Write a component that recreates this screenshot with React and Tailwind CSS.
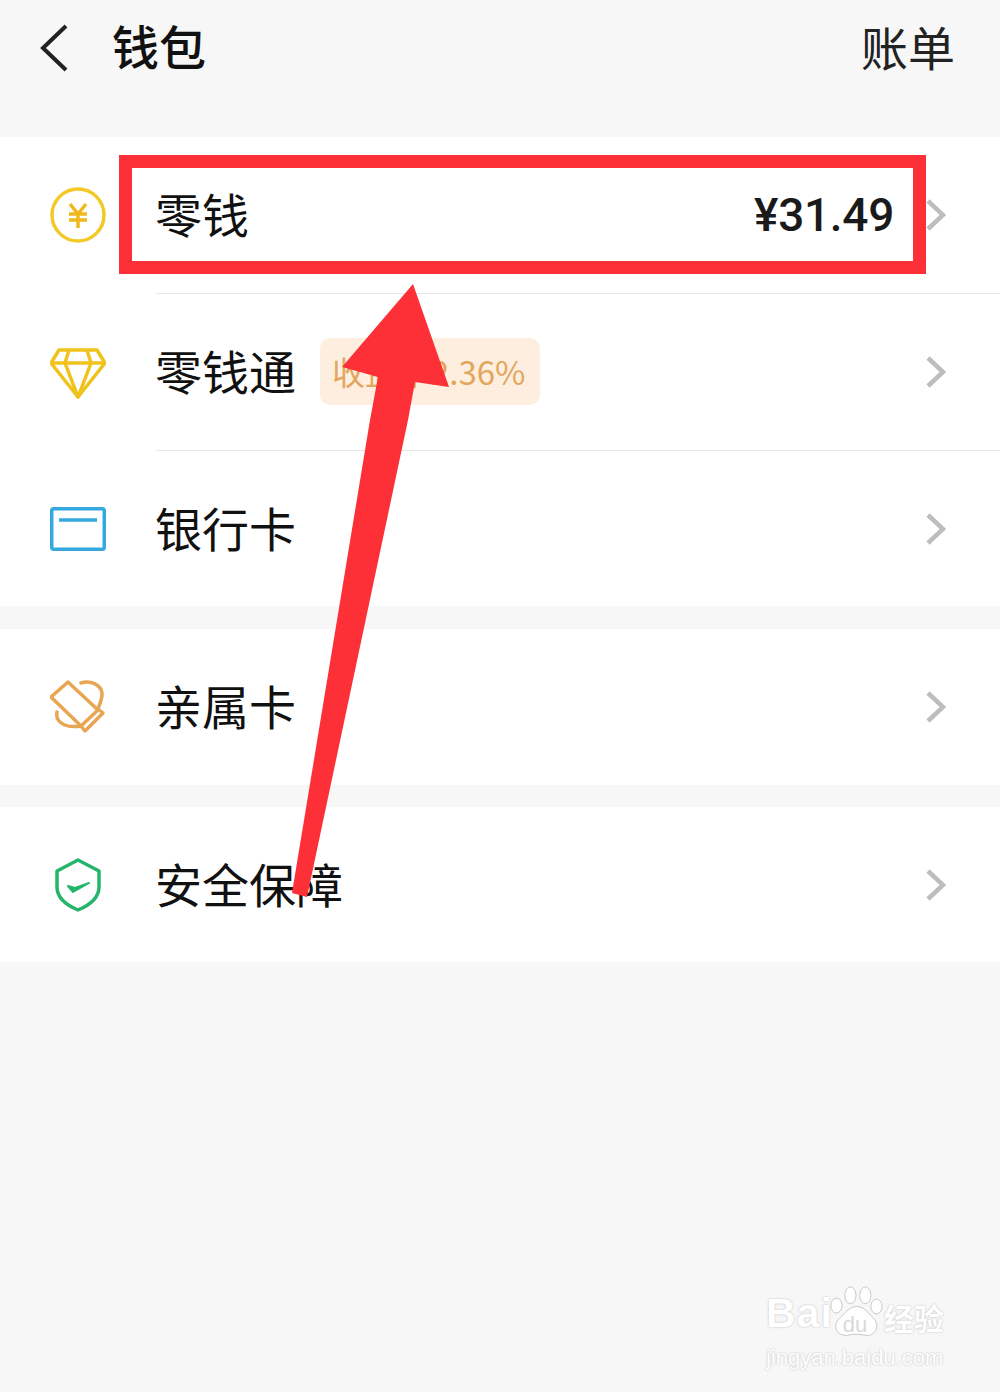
const CJK = 'font-["Noto_Sans_CJK_SC","Noto_Sans",sans-serif]'

function CoinIcon() {
    return <svg className="-mt-px" width="56" height="56" viewBox="0 0 56 56" fill="none" stroke="#f2c927" strokeWidth="3.5">
        <circle cx="28" cy="28" r="26" />
        <path d="M20 17l8 10 8-10M19 27h18M19 33h18M28 27v14" stroke="#efb91c" strokeWidth="3.5" />
    </svg>
}

function DiamondIcon() {
    return <svg width="56" height="52" viewBox="0 -1 56 52" fill="none" stroke="#f0c31c" strokeWidth="3.5" strokeLinejoin="round">
        <path d="M1 15L9 2h38l8 13L28 49z" />
        <path d="M1 15h54M19 2l-4 13 13 34 13-34-4-13" />
    </svg>
}

function CardIcon() {
    return <svg width="56" height="44" viewBox="0 0 56 44" fill="none" stroke="#35a8e0" strokeWidth="3.5">
        <rect x="1.75" y="1.75" width="52.5" height="40.5" rx="2" />
        <path d="M9 13h38" />
    </svg>
}

function FamilyCardIcon() {
    return <svg width="56" height="54" viewBox="0 0 56 54" fill="none" stroke="#e8a552" strokeWidth="3.5" strokeLinejoin="round" strokeLinecap="round">
        <path d="M18 2L1 17l30 29 17-16z" />
        <path d="M31 46l4 5 18-18-5-4" />
        <path d="M31 3c10-3 20 2 21 10 .5 5-2 11-4 16" />
        <path d="M7 32c-2 8 6 17 24 14" />
    </svg>
}

function ShieldIcon() {
    return <svg width="46" height="54" viewBox="0 0 46 54" fill="none" stroke="#25b56b" strokeWidth="3.5" strokeLinejoin="round">
        <path d="M23 2l21 11v16c0 10-9 18-21 23C11 47 2 39 2 29V13z" />
        <path d="M13 28l5 6 16-9-14 5z" fill="#25b56b" strokeWidth="2" />
    </svg>
}

function Chevron() {
    return <svg width="20" height="32" viewBox="0 0 20 32" fill="none" stroke="#bdbdbd" strokeWidth="4.5">
        <path d="M2 2l15 14L2 30" />
    </svg>
}

function Row({ icon, label, height, divider, children }) {
    return <div className={`flex items-stretch bg-white ${height}`}>
        <div className="flex w-[156px] shrink-0 items-center pl-[50px]">
            <div className="flex w-[56px] justify-center">{icon}</div>
        </div>
        <div className={`flex flex-1 items-center pr-[54px] ${divider ? 'border-b border-[#e6e6e6]' : ''}`}>
            <span className="-ml-px mb-[5px] text-[47px] leading-none text-[#111]">{label}</span>
            <div className="flex flex-1 items-center">{children}</div>
            <Chevron />
        </div>
    </div>
}

function Watermark() {
    const outline = '[text-shadow:0_0_2px_#b5b5b5]'
    return <div className="absolute left-[766px] top-[1284px] w-[190px] whitespace-nowrap text-white">
        <div className="flex items-end">
            <span className={`font-["Liberation_Sans"] text-[41px] font-bold leading-[58px] tracking-[1px] ${outline}`}>Bai</span>
            <div className="relative -ml-[4px] shrink-0">
                <svg className="block" width="54" height="58" viewBox="0 0 58 58" fill="#fff" stroke="#c4c4c4" strokeWidth="1">
                    <ellipse cx="8" cy="21" rx="6" ry="8" />
                    <ellipse cx="23" cy="10" rx="6" ry="9" />
                    <ellipse cx="39" cy="10" rx="6" ry="9" />
                    <ellipse cx="51" cy="22" rx="6" ry="8" />
                    <path d="M30 22c8 0 13 8 19 14 6 8 0 18-9 17-7-1-13-2-20 0C10 54 3 45 10 36c6-5 11-14 20-14z" />
                </svg>
                <span className="absolute left-[14px] top-[30px] font-['Liberation_Sans'] text-[22px] leading-[22px] text-[#d9d9d9]">du</span>
            </div>
            <span className={`ml-[1px] shrink-0 text-[30px] font-bold leading-[50px] ${CJK} ${outline}`}>经验</span>
        </div>
        <div className={`mt-[5px] font-["Liberation_Sans"] text-[22px] leading-[22px] ${outline}`}>jingyan.baidu.com</div>
    </div>
}

export default function App() {
    return <main className={`relative h-[1392px] w-[1000px] overflow-hidden bg-[#f7f7f7] ${CJK}`}>
        <header className="flex h-[137px] items-start justify-between pl-[40px] pr-[45px] pt-[23px]">
            <div className="flex items-start">
                <svg width="30" height="50" viewBox="0 0 30 50" fill="none" stroke="#222" strokeWidth="4">
                    <path d="M26 3L3 25l23 22" />
                </svg>
                <h1 className="-mt-[3px] ml-[42px] text-[47px] font-medium leading-[50px] text-[#111]">钱包</h1>
            </div>
            <span className="-mt-[2px] text-[47px] leading-[50px] text-[#222]">账单</span>
        </header>

        <section>
            <Row icon={<CoinIcon />} label="零钱" height="h-[157px]" divider>
                <span className="ml-auto mr-[32px] font-['Roboto'] text-[46px] font-medium leading-none tracking-[-0.3px] text-[#1a1a1a]">¥31.49</span>
            </Row>
            <Row icon={<DiamondIcon />} label="零钱通" height="h-[157px]" divider>
                <span className="-mt-px ml-[24px] flex h-[67px] w-[220px] items-center rounded-[10px] bg-[#fdeee0] pl-[12px] text-[33px] text-[#e3a65c]">收益率2.36%</span>
            </Row>
            <Row icon={<CardIcon />} label="银行卡" height="h-[155px]" />
        </section>

        <section className="mt-[23px]">
            <Row icon={<FamilyCardIcon />} label="亲属卡" height="h-[156px]" />
        </section>

        <section className="mt-[22px]">
            <Row icon={<ShieldIcon />} label="安全保障" height="h-[155px]" />
        </section>

        <Watermark />

        {/* red highlight and arrow are annotations on top of the screenshot */}
        <div className="absolute left-[119px] top-[155px] h-[119px] w-[807px] border-[13px] border-[#fd3038]" />
        <svg className="absolute left-0 top-0" width="1000" height="1000" viewBox="0 0 1000 1000">
            <path d="M413 284L342 367l36 10-8 43-78 473 15 4 101-477 7-38 34 5z" fill="#fd3038" />
        </svg>
    </main>
}
